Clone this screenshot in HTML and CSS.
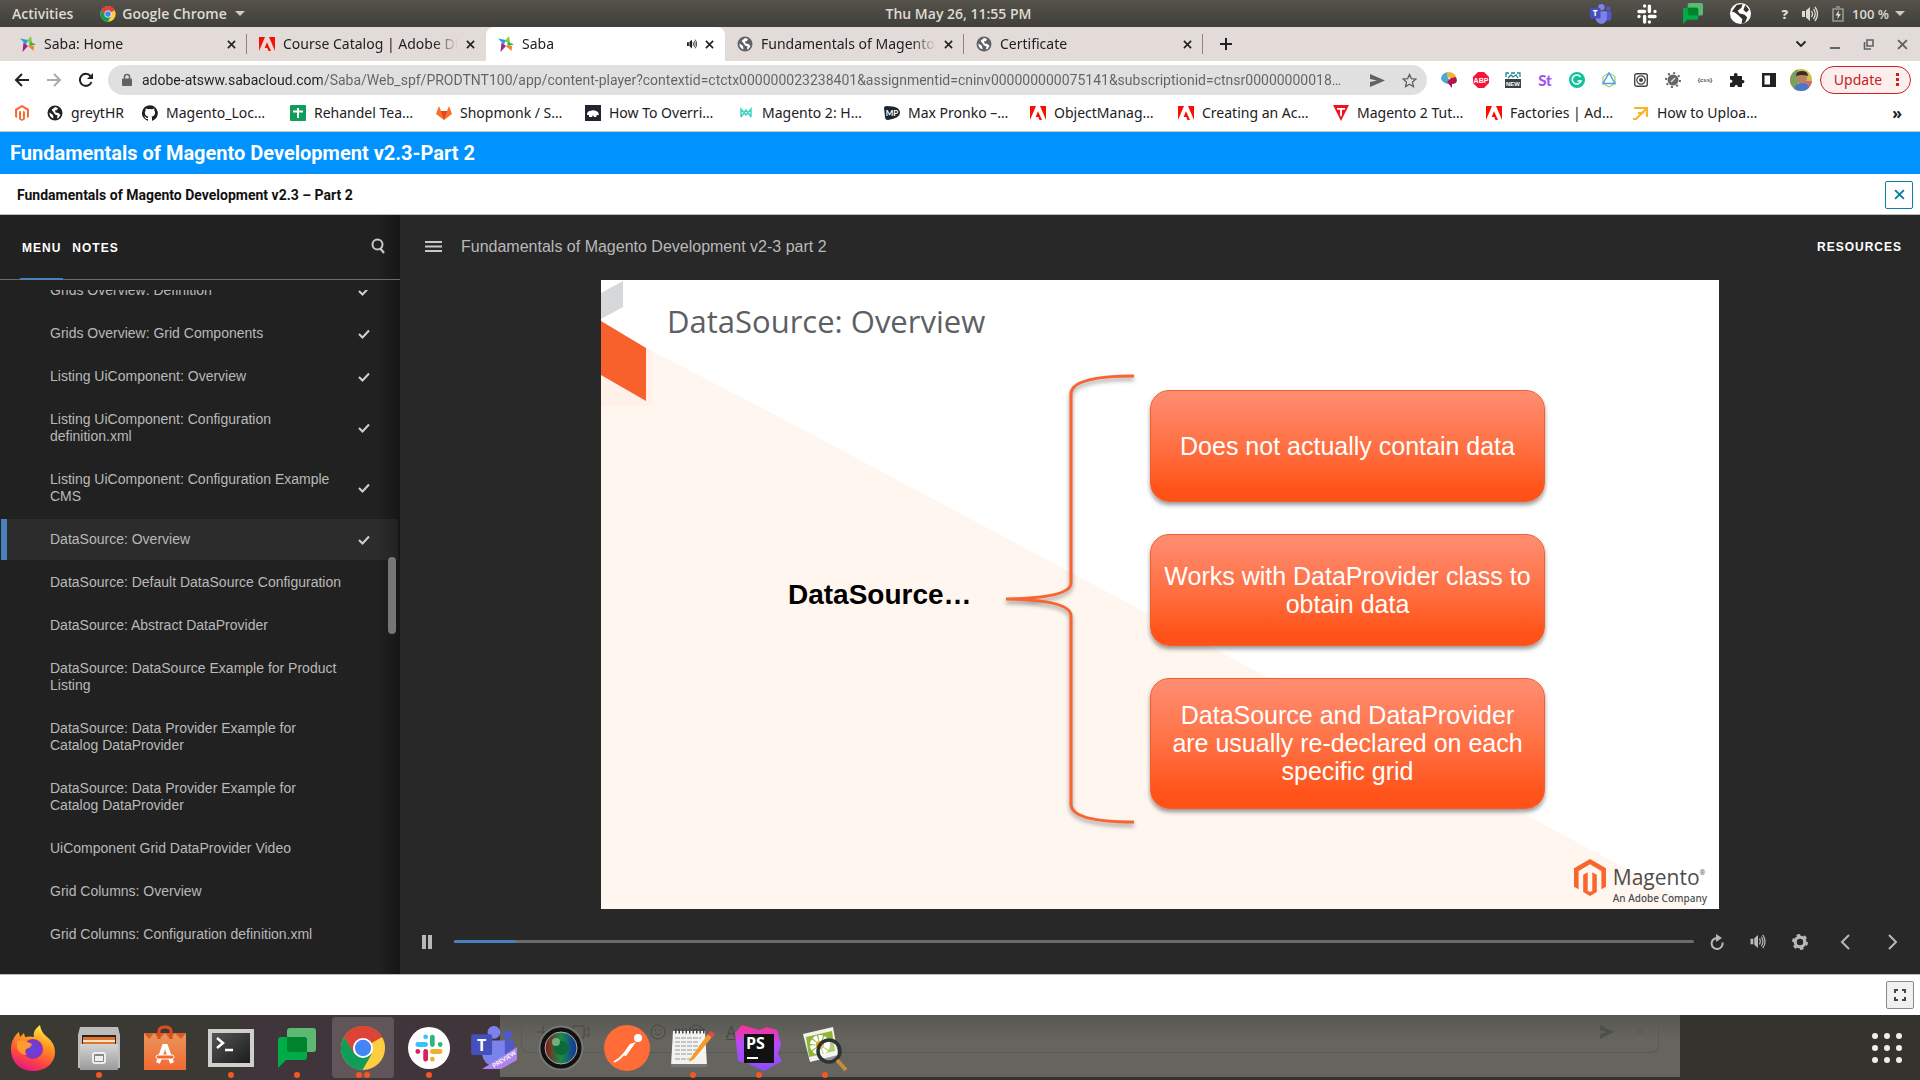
FILE: index.html
```html
<!DOCTYPE html>
<html lang="en">
<head>
<meta charset="utf-8">
<title>Saba</title>
<link rel="stylesheet" href="styles.css">
</head>
<body>
<svg class="defs" aria-hidden="true">
  <defs>
    <linearGradient id="g-ff" x1="0.7" y1="0" x2="0.3" y2="1"><stop offset="0" stop-color="#fff44f"/><stop offset=".35" stop-color="#ff9a1f"/><stop offset=".7" stop-color="#ff4a3d"/><stop offset="1" stop-color="#e31587"/></linearGradient>
    <radialGradient id="g-ffb"><stop offset="0" stop-color="#5b4be0"/><stop offset="1" stop-color="#8a2fc4"/></radialGradient>
    <linearGradient id="g-metal" x1="0" y1="0" x2="0" y2="1"><stop offset="0" stop-color="#d4d4d4"/><stop offset="1" stop-color="#9a9a9a"/></linearGradient>
    <linearGradient id="g-bag" x1="0" y1="0" x2="0" y2="1"><stop offset="0" stop-color="#e9955a"/><stop offset="1" stop-color="#f26a34"/></linearGradient>
    <linearGradient id="g-term" x1="0" y1="0" x2="1" y2="1"><stop offset="0" stop-color="#555"/><stop offset="1" stop-color="#1b1b1b"/></linearGradient>
    <linearGradient id="g-lens" x1="0" y1="0" x2="1" y2="0"><stop offset="0" stop-color="#8a1616"/><stop offset=".5" stop-color="#1d8a4a"/><stop offset="1" stop-color="#1030a0"/></linearGradient>
    <linearGradient id="g-ps" x1="0" y1="0" x2="0" y2="1"><stop offset="0" stop-color="#ff318c"/><stop offset=".4" stop-color="#b74af7"/><stop offset="1" stop-color="#8a4cff"/></linearGradient>
  </defs>
  <symbol id="chrome" viewBox="0 0 48 48">
    <circle cx="24" cy="24" r="23" fill="#ffcd40"/>
    <path d="M24 24 4.100 12.500A23 23 0 0 1 43.900 12.500Z" fill="#db4437"/><path d="M24 13h20.200A23 23 0 0 0 4.100 12.500L14 30Z" fill="#db4437"/>
    <path d="M4.100 12.500A23 23 0 0 0 23.500 47L33.500 29.500 24 34.500 14.500 29.500Z" fill="#0f9d58"/>
    <circle cx="24" cy="24" r="10.500" fill="#fff"/><circle cx="24" cy="24" r="8.500" fill="#4285f4"/>
  </symbol>
  <symbol id="saba" viewBox="0 0 16 16">
    <path d="M0 2.500 8 4 6 8.500Z" fill="#1da1dc"/><path d="M11 0 12 6.500 6.500 5.500Z" fill="#8cc63f"/><path d="M9.500 5.500 16 8.500 9.500 10Z" fill="#3fae49"/><path d="M7.500 9.500 14 10 13.500 15Z" fill="#f58220"/><path d="M3.500 6.500 8 10 2.500 16Z" fill="#a0238e"/>
  </symbol>
  <symbol id="adobe" viewBox="0 0 16 16"><path d="M0 1h6L0 15ZM10 1h6v14ZM8 6.200 12 15H9.500L8.300 12H5.600Z" fill="#fa0f00"/></symbol>
  <symbol id="globe" viewBox="0 0 16 16"><circle cx="8" cy="8" r="7.500" fill="currentColor"/><path d="M2.500 7.500 6 10l.500 3.500C3.500 12.500 2 10 2.500 7.500ZM8 2l3 1-1 2-2 .500.500 2 3 .500 2 2-2 3-1.500.500.500-3-2.500-1L6 6.500 4.500 5Z" fill="#fff"/></symbol>
  <symbol id="x" viewBox="0 0 10 10"><path d="m1 1 8 8M9 1 1 9" stroke="currentColor" stroke-width="1.800" fill="none"/></symbol>
  <symbol id="magento" viewBox="0 0 32 37"><path d="M16 0 32 9.200V27.700L27.400 30.300V11.900L16 5.300 4.600 11.900V30.300L0 27.700V9.200ZM18.300 31.700 16 33 13.700 31.700V13.200L9.200 15.800V32.900L16 37 22.800 32.900V15.800L18.300 13.200Z" fill="#f9652c"/></symbol>
  <symbol id="slack" viewBox="0 0 20 20"><g stroke-width="3.400" stroke-linecap="round" fill="none"><path d="M7.600 2v0M2 7.500h5.600" stroke="var(--s1)"/><path d="M12.400 2.200v5.300M18 7.500v0" stroke="var(--s2)"/><path d="M12.400 12.500H18M12.400 18v0" stroke="var(--s3)"/><path d="M7.600 12.500V18M2 12.500v0" stroke="var(--s4)"/></g></symbol>
  <symbol id="teams" viewBox="0 0 48 44"><circle cx="40" cy="10" r="5" fill="#5059c9"/><circle cx="25" cy="7" r="7" fill="#7b83eb"/><path d="M35 16h12v14q-1 7-7 7t-6-5Z" fill="#5059c9"/><path d="M12 16h25v16q-2 11-12 12-11-1-13-12Z" fill="#7b83eb"/><rect y="9" width="23" height="23" rx="2" fill="#4650bd"/></symbol>
  <symbol id="chat" viewBox="0 0 38 40"><path d="M9 3q0-3 3-3h23q3 0 3 3v18q0 3-3 3H9Z" fill="#5bb974"/><path d="M0 12q0-3 3-3h23q3 0 3 3v17q0 3-3 3H8L0 40Z" fill="#00ac47"/><path d="M9 9h17q3 0 3 3v12H12q-3 0-3-3Z" fill="#00832d"/></symbol>
  <symbol id="speaker" viewBox="0 0 16 16"><path d="M0 5h3v6H0ZM4 4.500 8 1v14L4 11.500Z" fill="currentColor"/><path d="M9.500 5q2 3 0 6M11.500 3q3.500 5 0 10M13 1q5 7 0 14" stroke="currentColor" stroke-width="1.300" fill="none"/></symbol>
  <symbol id="check" viewBox="0 0 12 10"><path d="m1 5 3.500 3.500L11 1.500" stroke="#d0d0d0" stroke-width="2" fill="none"/></symbol>
</svg>

<header class="topbar">
  <div class="topbar-left"><button>Activities</button><button class="app"><svg width="16" height="16"><use href="#chrome"/></svg>Google Chrome<i class="caret"></i></button></div>
  <button class="clock">Thu May 26, 11:55 PM</button>
  <div class="tray">
    <svg width="22" height="20" viewBox="0 0 48 44"><use href="#teams"/><text x="6" y="27" font-family="Open Sans, sans-serif" font-weight="700" font-size="18" fill="#fff">T</text></svg>
    <svg class="slack-mono" width="20" height="20"><use href="#slack"/></svg>
    <svg width="22" height="21"><use href="#chat"/></svg>
    <svg width="23" height="23" viewBox="0 0 24 24"><circle cx="12" cy="12" r="11" fill="#fff"/><path d="M3 10 8 3l6-1-1 4-4 3 2 3 5 1 3 3-2 5-4 2 1-5-4-4-4-3ZM17 3l4 5-3 3-3-3Z" fill="#35332e"/></svg>
    <b>?</b>
    <svg width="16" height="16"><use href="#speaker"/></svg>
    <svg width="12" height="16" viewBox="0 0 12 16"><path d="M1 3h10v12H1ZM4 1h4" stroke="#9a9893" stroke-width="1.600" fill="none"/><path d="M7 4 3.500 9.500H6L5 13.500 9 8H6.500Z" fill="#ddd"/></svg>
    <span>100 %</span><i class="caret"></i>
  </div>
</header>

<nav class="tabs" aria-label="Tabs">
  <div class="tab"><svg width="16" height="16"><use href="#saba"/></svg><a href="#">Saba: Home</a><button aria-label="Close tab"><svg width="9" height="9"><use href="#x"/></svg></button></div>
  <div class="tab"><svg width="16" height="16"><use href="#adobe"/></svg><a href="#">Course Catalog | Adobe Di</a><button aria-label="Close tab"><svg width="9" height="9"><use href="#x"/></svg></button></div>
  <div class="tab active"><svg width="16" height="16"><use href="#saba"/></svg><a href="#">Saba</a><svg width="10" height="10"><use href="#speaker"/></svg><button aria-label="Close tab"><svg width="9" height="9"><use href="#x"/></svg></button></div>
  <div class="tab"><svg class="grey" width="16" height="16"><use href="#globe"/></svg><a href="#">Fundamentals of Magento</a><button aria-label="Close tab"><svg width="9" height="9"><use href="#x"/></svg></button></div>
  <div class="tab"><svg class="grey" width="16" height="16"><use href="#globe"/></svg><a href="#">Certificate</a><button aria-label="Close tab"><svg width="9" height="9"><use href="#x"/></svg></button></div>
  <button class="newtab" aria-label="New tab"><svg width="14" height="14" viewBox="0 0 14 14"><path d="M7 1v12M1 7h12" stroke="#202124" stroke-width="2"/></svg></button>
  <div class="window-buttons">
    <button aria-label="Search tabs"><svg width="12" height="12" viewBox="0 0 12 12"><path d="m1.500 3.500 4.500 4.500 4.500-4.500" stroke="#202124" stroke-width="1.800" fill="none"/></svg></button>
    <button aria-label="Minimize"><svg width="12" height="12" viewBox="0 0 12 12"><path d="M1 10h10" stroke="#5f6368" stroke-width="2"/></svg></button>
    <button aria-label="Restore"><svg width="12" height="12" viewBox="0 0 12 12"><path d="M4 2h6v6H4ZM1.500 4v7H8" stroke="#5f6368" stroke-width="1.600" fill="none"/></svg></button>
    <button class="grey" aria-label="Close"><svg width="11" height="11"><use href="#x"/></svg></button>
  </div>
</nav>

<div class="toolbar">
  <div class="nav-buttons">
    <button aria-label="Back"><svg width="16" height="16" viewBox="0 0 16 16"><path d="M15 8H2M8 2 2 8l6 6" stroke="#202124" stroke-width="2" fill="none"/></svg></button>
    <button aria-label="Forward"><svg width="16" height="16" viewBox="0 0 16 16"><path d="M1 8h13M8 2l6 6-6 6" stroke="#a9abae" stroke-width="2" fill="none"/></svg></button>
    <button aria-label="Reload"><svg width="16" height="16" viewBox="0 0 16 16"><path d="M13.500 10A6 6 0 1 1 12.500 4" stroke="#202124" stroke-width="2" fill="none"/><path d="M15 1v6H9Z" fill="#202124"/></svg></button>
  </div>
  <div class="omnibox">
    <svg width="10" height="14" viewBox="0 0 10 14"><path d="M1 5.500h8q1 0 1 1V12q0 1-1 1H1q-1 0-1-1V6.500q0-1 1-1Z" fill="#5f6368"/><path d="M2.500 6V3.500q0-2 2.500-2t2.500 2V6" stroke="#5f6368" stroke-width="1.500" fill="none"/></svg>
    <input class="url" type="text" aria-label="Address" value="adobe-atsww.sabacloud.com/Saba/Web_spf/PRODTNT100/app/content-player?contextid=ctctx000000023238401&amp;assignmentid=cninv000000000075141&amp;subscriptionid=ctnsr00000000018…">
    <button aria-label="Share"><svg width="15" height="13" viewBox="0 0 15 13"><path d="M0 0 15 6.500 0 13V8l7-1.500L0 5Z" fill="#5f6368"/></svg></button>
    <button aria-label="Bookmark"><svg width="15" height="15" viewBox="0 0 16 16"><path d="m8 1.500 2 4.500 4.800.500-3.600 3.200 1 4.800L8 12l-4.200 2.500 1-4.800L1.200 6.500 6 6Z" stroke="#5f6368" stroke-width="1.400" fill="none"/></svg></button>
  </div>
  <div class="extensions">
    <svg width="16" height="16" viewBox="0 0 16 16"><path d="M0 6q1-5 7-6v6l3 3-3 3Q0 10 0 6Z" fill="#4aa8d8"/><path d="M6 0q8 0 9 5l-4 2-5-2Z" fill="#f5b335"/><path d="M15 5q3 7-4 7v4l-5-6 4-4Z" fill="#b0174c"/></svg>
    <svg width="16" height="16" viewBox="0 0 16 16"><path d="M5 0h6l5 5v6l-5 5H5l-5-5V5Z" fill="#f7153b"/><text x="8" y="11" text-anchor="middle" font-size="7" font-weight="700" font-family="Liberation Sans, sans-serif" fill="#fff">ABP</text></svg>
    <svg width="16" height="16" viewBox="0 0 16 16"><path d="M1 5V1h3M6 1h4M12 1h3v4M3 6l3-3 2 2 3-2 2 3" stroke="#1a8a93" fill="none" stroke-width="1.300"/><rect y="7" width="16" height="9" fill="#3c4043"/><text x="8" y="14" text-anchor="middle" font-size="6" font-weight="700" font-family="Liberation Sans, sans-serif" fill="#fff">NEW</text></svg>
    <svg width="16" height="16" viewBox="0 0 16 16"><text x="8" y="14" text-anchor="middle" font-size="15" font-weight="900" font-family="Lato, sans-serif" fill="#a155f0">St</text></svg>
    <svg width="16" height="16" viewBox="0 0 16 16"><circle cx="8" cy="8" r="8" fill="#11c29b"/><path d="M11.500 5A4.500 4.500 0 1 0 12 9H8.500" stroke="#fff" stroke-width="1.600" fill="none"/></svg>
    <svg width="16" height="16" viewBox="0 0 16 16"><path d="M8 1 14 4.500v7L8 15l-6-3.500v-7Z" stroke="#8bc34a" fill="none"/><path d="m8 1 6 10.500H2Z" stroke="#4aa0e0" stroke-width="1.500" fill="none"/></svg>
    <svg width="14" height="14" viewBox="0 0 14 14"><rect x=".7" y=".7" width="12.600" height="12.600" rx="2" fill="none" stroke="#444" stroke-width="1.400"/><circle cx="7" cy="7" r="4.200" fill="none" stroke="#444" stroke-width="1.200"/><circle cx="7" cy="7" r="2" fill="#444"/></svg>
    <svg width="16" height="16" viewBox="0 0 16 16"><circle cx="8" cy="8" r="5.500" fill="#666"/><circle cx="8" cy="8" r="7" fill="none" stroke="#666" stroke-width="2" stroke-dasharray="2 3.500"/><path d="m6 10 4-4" stroke="#ddd" stroke-width="1.500"/></svg>
    <svg width="16" height="16" viewBox="0 0 16 16"><text x="8" y="10" text-anchor="middle" font-size="6" font-weight="700" font-family="Liberation Sans, sans-serif" fill="#555">{css}</text></svg>
    <svg width="16" height="16" viewBox="0 0 16 16"><path d="M1 4h4q-.500-3 1.700-3T8.500 4H13v4q2.500-.500 2.500 1.500T13 11.500V15H9q0-2-1.700-2T5.500 15H1v-4q2.500 0 2.500-1.700T1 7.500Z" fill="#202124"/></svg>
    <svg width="14" height="14" viewBox="0 0 14 14"><path d="M0 0h14v14H0ZM2.500 2.500v9H8v-9Z" fill="#202124" fill-rule="evenodd"/></svg>
    <svg width="22" height="22" viewBox="0 0 22 22"><clipPath id="av"><circle cx="11" cy="11" r="11"/></clipPath><g clip-path="url(#av)"><path d="M0 0h22v22H0Z" fill="#d0c04a"/><path d="M0 0h8v22H0Z" fill="#7da05e"/><path d="M14 12h8v10h-8Z" fill="#d06a7a"/><ellipse cx="12" cy="9" rx="5" ry="6" fill="#b98262"/><path d="M6 7q0-5 6-5t6 5q-6-2-12 0Z" fill="#3a2b28"/><path d="M4 22q0-8 8-8t8 8Z" fill="#4a78c5"/></g></svg>
  </div>
  <button class="update">Update<svg width="4" height="14" viewBox="0 0 4 14"><path d="M0 0h3v3H0ZM0 5h3v3H0ZM0 10h3v3H0Z" fill="#c5221f"/></svg></button>
</div>

<nav class="bookmarks" aria-label="Bookmarks">
  <a href="#" aria-label="Magento"><svg width="14" height="16"><use href="#magento"/></svg></a>
  <a href="#"><svg class="black" width="16" height="16"><use href="#globe"/></svg>greytHR</a>
  <a href="#"><svg width="16" height="16" viewBox="0 0 16 16"><path d="M8 .200a8 8 0 0 0-2.500 15.600c.400 0 .500-.200.500-.400v-1.500c-2.200.500-2.700-1-2.700-1-.400-.900-.900-1.200-.900-1.200-.700-.500.100-.500.100-.500.800.100 1.200.800 1.200.800.700 1.300 1.900.900 2.300.700.100-.500.300-.900.500-1.100-1.800-.200-3.600-.900-3.600-4 0-.900.300-1.600.800-2.100-.100-.200-.400-1 .100-2.100 0 0 .700-.200 2.200.800a7.500 7.500 0 0 1 4 0c1.500-1 2.200-.800 2.200-.800.400 1.100.200 1.900.100 2.100.500.600.800 1.300.800 2.100 0 3.100-1.900 3.800-3.700 4 .300.200.600.700.600 1.500v2.200c0 .200.100.500.600.400A8 8 0 0 0 8 .200Z" fill="#1b1f23"/></svg>Magento_Loc…</a>
  <a href="#"><svg width="16" height="16" viewBox="0 0 16 16"><rect width="16" height="16" rx="1" fill="#0f9d58"/><path d="M8 3v10M3 6.500h10" stroke="#fff" stroke-width="2"/></svg>Rehandel Tea…</a>
  <a href="#"><svg width="16" height="16" viewBox="0 0 16 16"><path d="M0 9 3 1l2 5h6l2-5 3 8-8 6Z" fill="#fc6d26"/><path d="M5 6h6L8 15Z" fill="#e24329"/></svg>Shopmonk / S…</a>
  <a href="#"><svg width="16" height="16" viewBox="0 0 16 16"><path d="M0 0h16v16H0Z" fill="#20252e"/><path d="M2 10q0-4 3-4 4-2 8 1l1 3h-2l-1 2H9l-1-2-1 2H4v-2Z" fill="#fff"/></svg>How To Overri…</a>
  <a href="#"><svg width="16" height="14" viewBox="0 0 14 14"><path d="M2 11V3l5 6 5-6v8M2 11l5-7 5 7" stroke="#3fd3c0" stroke-width="1.500" fill="none"/></svg>Magento 2: H…</a>
  <a href="#"><svg width="16" height="16" viewBox="0 0 16 16"><path d="M0 3q0-2 3-2 13 0 13 7 0 5-12 7-3 0-3-3Z" fill="#1d2430"/><text x="8" y="11" text-anchor="middle" font-size="8" font-weight="700" font-family="Lato, sans-serif" fill="#fff">MP</text></svg>Max Pronko –…</a>
  <a href="#"><svg width="16" height="16"><use href="#adobe"/></svg>ObjectManag…</a>
  <a href="#"><svg width="16" height="16"><use href="#adobe"/></svg>Creating an Ac…</a>
  <a href="#"><svg width="16" height="16" viewBox="0 0 16 16"><path d="M0 0h16L8 16Z" fill="#f0131e"/><path d="M4 3h8v1.800H9V10l-1 2-1-2V4.800H4Z" fill="#fff"/></svg>Magento 2 Tut…</a>
  <a href="#"><svg width="16" height="16"><use href="#adobe"/></svg>Factories | Ad…</a>
  <a href="#"><svg width="16" height="16" viewBox="0 0 16 16"><path d="M1 3h13v9M5 8h4L3 14H0" stroke="#f9b42d" stroke-width="2.200" fill="none"/><path d="m8 9 6-6" stroke="#f9b42d" stroke-width="2.200"/></svg>How to Uploa…</a>
  <button aria-label="More bookmarks">»</button>
</nav>

<div class="course-bar">Fundamentals of Magento Development v2.3-Part 2</div>
<div class="lesson-bar"><h1>Fundamentals of Magento Development v2.3 – Part 2</h1><button aria-label="Close lesson"><svg width="11" height="11"><use href="#x"/></svg></button></div>

<div class="player">
  <aside class="sidebar">
    <div class="side-tabs"><button class="current">MENU</button><button>NOTES</button>
      <button class="search" aria-label="Search"><svg width="14" height="16" viewBox="0 0 14 16"><circle cx="6.500" cy="6.500" r="5" stroke="#c8c8c8" stroke-width="2" fill="none"/><path d="m9 10 4 5" stroke="#c8c8c8" stroke-width="2.200"/></svg></button></div>
    <div class="list-window">
      <ul class="lessons">
        <li><a href="#">Grids Overview: Definition</a><svg width="12" height="10"><use href="#check"/></svg></li>
        <li><a href="#">Grids Overview: Grid Components</a><svg width="12" height="10"><use href="#check"/></svg></li>
        <li><a href="#">Listing UiComponent: Overview</a><svg width="12" height="10"><use href="#check"/></svg></li>
        <li><a href="#">Listing UiComponent: Configuration definition.xml</a><svg width="12" height="10"><use href="#check"/></svg></li>
        <li><a href="#">Listing UiComponent: Configuration Example CMS</a><svg width="12" height="10"><use href="#check"/></svg></li>
        <li class="current"><a href="#">DataSource: Overview</a><svg width="12" height="10"><use href="#check"/></svg></li>
        <li><a href="#">DataSource: Default DataSource Configuration</a></li>
        <li><a href="#">DataSource: Abstract DataProvider</a></li>
        <li><a href="#">DataSource: DataSource Example for Product Listing</a></li>
        <li><a href="#">DataSource: Data Provider Example for Catalog DataProvider</a></li>
        <li><a href="#">DataSource: Data Provider Example for Catalog DataProvider</a></li>
        <li><a href="#">UiComponent Grid DataProvider Video</a></li>
        <li><a href="#">Grid Columns: Overview</a></li>
        <li><a href="#">Grid Columns: Configuration definition.xml</a></li>
      </ul>
    </div>
    <div class="scroll-thumb"></div>
  </aside>

  <main class="main">
    <div class="main-head">
      <button aria-label="Toggle menu"><svg width="17" height="11" viewBox="0 0 17 11"><path d="M0 1h17M0 5.500h17M0 10h17" stroke="#c8c8c8" stroke-width="2"/></svg></button>
      <span>Fundamentals of Magento Development v2-3 part 2</span>
      <button class="resources">RESOURCES</button>
    </div>
    <div class="stage">
      <article class="slide">
        <svg class="slide-art" viewBox="0 0 1118 629" preserveAspectRatio="none"><path d="M0 40 45 66 1101 629H0Z" fill="#fff6f0"/><path d="M0 60h51v66H0Z" fill="#ffefe6" opacity=".6"/><path d="M0 0h200v148L45 68 0 41Z" fill="#fff"/><path d="M0 13 22 1v26L0 39Z" fill="#d6d8da"/><path d="M0 41 45 68v53L0 95Z" fill="#f8612c"/></svg>
        <h2>DataSource: Overview</h2>
        <div class="slide-body">
          <strong>DataSource…</strong>
          <svg class="brace" width="128" height="450" viewBox="0 0 128 450"><path d="M128 2Q65 2 65 20V209Q65 224 0 225 65 226 65 242V430Q65 448 128 448" stroke="#f96430" stroke-width="3" fill="none"/></svg>
          <div class="cards">
            <p>Does not actually contain data</p>
            <p>Works with DataProvider class to obtain data</p>
            <p class="tall">DataSource and DataProvider are usually re-declared on each specific grid</p>
          </div>
        </div>
        <footer class="brand"><svg width="32" height="37"><use href="#magento"/></svg><div><b>Magento<sup>®</sup></b><small>An Adobe Company</small></div></footer>
      </article>
    </div>
    <div class="controls">
      <button aria-label="Pause"><svg width="10" height="14" viewBox="0 0 10 14"><path d="M0 0h4v14H0ZM6 0h4v14H6Z" fill="#b8b8b8"/></svg></button>
      <div class="seek"><div class="seek-fill" style="width:5%"></div></div>
      <div class="control-buttons">
        <button aria-label="Replay"><svg width="14" height="16" viewBox="0 0 14 16"><path d="M12.500 8.500A5.500 5.500 0 1 1 7 4" stroke="#b8b8b8" stroke-width="2" fill="none"/><path d="M6 0 12 4 6 8Z" fill="#b8b8b8"/></svg></button>
        <button aria-label="Volume"><svg width="16" height="15"><use href="#speaker"/></svg></button>
        <button aria-label="Settings"><svg width="16" height="16" viewBox="0 0 16 16"><circle cx="8" cy="8" r="4.800" stroke="#b8b8b8" stroke-width="3.200" fill="none"/><circle cx="8" cy="8" r="6.900" stroke="#b8b8b8" stroke-width="2.200" stroke-dasharray="3.600 3.620" fill="none"/></svg></button>
        <button class="step" aria-label="Previous"><svg width="10" height="16" viewBox="0 0 10 16"><path d="M9 1 2 8l7 7" stroke="#b8b8b8" stroke-width="2" fill="none"/></svg></button>
        <button class="step" aria-label="Next"><svg width="10" height="16" viewBox="0 0 10 16"><path d="m1 1 7 7-7 7" stroke="#b8b8b8" stroke-width="2" fill="none"/></svg></button>
      </div>
    </div>
  </main>
</div>

<div class="page-foot"><button aria-label="Full screen"><svg width="12" height="12" viewBox="0 0 12 12"><path d="M1 4V1h3M8 1h3v3M11 8v3H8M4 11H1V8" stroke="#444" stroke-width="2" fill="none"/></svg></button></div>

<footer class="dock">
  <div class="dock-back">
    <div class="composer">
      <svg width="14" height="14" viewBox="0 0 14 14"><path d="M7 1v12M1 7h12" stroke="#484843"/></svg>
      <svg width="18" height="14" viewBox="0 0 18 14"><path d="M1 1h11v12H1ZM12 6l5-4v10l-5-4" stroke="#484843" fill="none"/></svg>
      <svg width="16" height="16" viewBox="0 0 16 16"><rect x="3" y="4" width="10" height="11" stroke="#484843" fill="none"/></svg>
      <svg width="16" height="16" viewBox="0 0 16 16"><circle cx="8" cy="8" r="7" stroke="#484843" fill="none"/><path d="M5 9q3 4 6 0M5.500 5v1.500M10.500 5v1.500" stroke="#484843" fill="none"/></svg>
      <svg width="16" height="16" viewBox="0 0 16 16"><circle cx="8" cy="8" r="7" stroke="#484843" fill="none"/><circle cx="8" cy="8" r="3" stroke="#484843" fill="none"/></svg>
      <u>Aa</u>
      <svg class="send" width="14" height="14" viewBox="0 0 14 14"><path d="M0 0 14 7 0 14V9l7-2L0 5Z" fill="#50504b"/></svg>
      <svg width="8" height="8" viewBox="0 0 8 8"><path d="m1 2 3 3 3-3" stroke="#50504b" fill="none"/></svg>
    </div>
  </div>
  <button aria-label="Firefox"><svg width="46" height="48" viewBox="0 0 46 48"><path d="M23 47C9 47 1 37 1 25 1 18 4 12 9 8l1 5 4-4 1 4q5-1 9 0-2-6 6-12 1 7 6 11 9 7 9 16c0 11-9 19-22 19Z" fill="url(#g-ff)"/><circle cx="23" cy="25" r="10" fill="url(#g-ffb)"/><path d="M7 17q6-2 15 3-1 4-6 5-2 3 1 6-8-1-10-7Z" fill="#ff9a2e"/></svg></button>
  <button class="run" aria-label="Files"><svg width="44" height="46" viewBox="0 0 44 46"><path d="M3 2h38l2 8v33H1V10Z" fill="#bcbcbc"/><path d="M5 10h34v10H5Z" fill="#2b2422"/><path d="M6 12h32v8H6Z" fill="#e0752c"/><path d="M6 15h32v2H6Z" fill="#ffe2c0"/><path d="M3 19h38v26H3Z" fill="url(#g-metal)"/><rect x="16" y="28" width="12" height="10" rx="2" stroke="#eee" stroke-width="2" fill="#888"/><rect x="18" y="31" width="8" height="5" fill="#eee"/></svg></button>
  <button aria-label="Software"><svg width="44" height="46" viewBox="0 0 44 46"><path d="M1 8h42v37H1Z" fill="url(#g-bag)"/><path d="m1 8 5 6 5-6 5 6 6-6 5 6 5-6 6 6 5-6" fill="#dc5a28"/><path d="M16 14V6q0-4 6-4t6 4v8" stroke="#d94e1c" stroke-width="3" fill="none"/><path d="m15 38 6-17h2l6 17" stroke="#fff" stroke-width="4" fill="none"/><rect x="13" y="30" width="18" height="4" rx="2" fill="#f6682c" stroke="#fff"/></svg></button>
  <button class="run" aria-label="Terminal"><svg width="46" height="40" viewBox="0 0 46 40"><path d="M0 1h46v38H0Z" fill="#cfcfcf"/><path d="M4 5h38v30H4Z" fill="url(#g-term)"/><path d="m9 10 6 5-6 5M17 22h8" stroke="#fff" stroke-width="2.500" fill="none"/></svg></button>
  <button class="run" aria-label="Google Chat"><svg width="38" height="40"><use href="#chat"/></svg></button>
  <button class="run two focused" aria-label="Google Chrome"><svg width="46" height="46"><use href="#chrome"/></svg></button>
  <button class="run" aria-label="Slack"><span class="slack-disc"><svg width="28" height="28"><use href="#slack"/></svg></span></button>
  <button aria-label="Teams"><svg width="48" height="44" viewBox="0 0 48 44"><use href="#teams" width="44" height="40"/><text x="6" y="25" font-family="Open Sans, sans-serif" font-weight="700" font-size="16" fill="#fff">T</text><path d="M11 43 46 21v13L30 43Z" fill="#b084ea"/><text font-family="Lato, sans-serif" font-size="6" font-weight="700" fill="#fff" transform="translate(23 42) rotate(-32)">PREVIEW</text></svg></button>
  <button aria-label="Camera"><svg width="46" height="46" viewBox="0 0 46 46"><circle cx="23" cy="23" r="21.500" fill="#111" stroke="#777" stroke-width="2"/><circle cx="23" cy="23" r="16" fill="url(#g-lens)" stroke="#aaa"/><circle cx="23" cy="23" r="7" fill="#0b6b35"/><circle cx="18" cy="17" r="4" fill="#9fe0b0" opacity=".6"/></svg></button>
  <button aria-label="Postman"><svg width="46" height="46" viewBox="0 0 46 46"><circle cx="23" cy="23" r="23" fill="#ff6c37"/><circle cx="34" cy="13" r="4" fill="#fff"/><path d="M32 17 22 31l-4-1 8-11Z" fill="#fff"/><path d="m20 29-5 5-5 3" stroke="#fff" stroke-width="2" fill="none"/></svg></button>
  <button class="run" aria-label="Text editor"><svg width="46" height="44" viewBox="0 0 46 44"><path d="M3 5h32l2 35H1Z" fill="#f3f3ef"/><path d="M1 38h36v3H1Z" fill="#777"/><path d="M5 12h26M5 16h24M5 20h27M5 24h22M5 28h20M5 33h18" stroke="#999" stroke-dasharray="5 1"/><path d="M5 5h30" stroke="#444" stroke-width="5" stroke-dasharray="1.500 2"/><path d="M20 33 38 8l4 3-18 22-5 3Z" fill="#f39a2b"/><path d="m38 8 3-3 4 3-3 4Z" fill="#e54848"/></svg></button>
  <button class="run" aria-label="PhpStorm"><svg width="48" height="48" viewBox="0 0 48 48"><path d="M7 1 24 6l8-3 10 3 4 14-3 10 4 7-18 10-15-7-11-3L0 9Z" fill="url(#g-ps)"/><path d="M9 10h30v29H9Z" fill="#111"/><text x="11" y="25" font-family="Open Sans, sans-serif" font-weight="700" font-size="16" fill="#fff">PS</text><path d="M12 34h11" stroke="#fff" stroke-width="2"/></svg></button>
  <button class="run" aria-label="Image viewer"><svg width="46" height="46" viewBox="0 0 46 46"><path d="m1 9 30-7 5 28-28 7Z" fill="#f2f2ea"/><path d="m4 12 26-6 3 20-26 6Z" fill="#8fb43a"/><circle cx="18" cy="20" r="7" fill="none" stroke="#fff" stroke-width="6" stroke-dasharray="3.500 1"/><circle cx="18" cy="20" r="4" fill="#f3a71c"/><circle cx="27" cy="26" r="11" fill="#ffffff50" stroke="#2c3336" stroke-width="3.500"/><path d="m35 35 9 10" stroke="#c98a3a" stroke-width="4"/></svg></button>
  <button class="apps" aria-label="Show applications"><svg width="32" height="32" viewBox="0 0 32 32"><g fill="#eee"><circle cx="4" cy="4" r="3"/><circle cx="16" cy="4" r="3"/><circle cx="28" cy="4" r="3"/><circle cx="4" cy="16" r="3"/><circle cx="16" cy="16" r="3"/><circle cx="28" cy="16" r="3"/><circle cx="4" cy="28" r="3"/><circle cx="16" cy="28" r="3"/><circle cx="28" cy="28" r="3"/></g></svg></button>
</footer>
</body>
</html>
```
FILE: styles.css
```css
* { box-sizing: border-box; }
body {
  margin: 0;
  min-height: 100vh;
  display: flex;
  flex-direction: column;
  font: 14px/18px "Noto Sans", "Open Sans", sans-serif;
  color: #202124;
  background: #fff;
}
button {
  display: flex;
  align-items: center;
  justify-content: center;
  border: 0;
  margin: 0;
  padding: 0;
  background: none;
  color: inherit;
  font: inherit;
  letter-spacing: inherit;
}
a { color: inherit; text-decoration: none; }
svg { display: block; flex: none; }
.defs { position: absolute; width: 0; height: 0; }
.grey { color: #5f6368; }
.black { color: #202124; }

/* desktop top bar */
.topbar {
  height: 27px;
  display: grid;
  grid-template-columns: 1fr auto 1fr;
  align-items: center;
  padding: 0 15px 0 12px;
  background: linear-gradient(#55524a, #403f3a);
  color: #dfdbd2;
  font-family: "Open Sans", sans-serif;
  font-weight: 600;
}
.topbar-left, .tray { display: flex; align-items: center; }
.topbar-left { gap: 27px; }
.app { gap: 6px; }
.caret {
  border: 5px solid transparent;
  border-top-color: #cfcbc2;
  border-bottom: 0;
  margin-left: 2px;
}
.tray { justify-content: flex-end; gap: 14px; font-size: 13px; }
.tray > svg:nth-of-type(-n+3) { margin-right: 11px; }
.tray b { margin-left: 16px; }
.tray .caret { margin-left: -8px; }
.tray span { margin-left: -6px; }
.slack-mono { --s1: #fff; --s2: #fff; --s3: #fff; --s4: #fff; }

/* browser tabs */
.tabs { display: flex; height: 34px; padding-left: 8px; background: #e3dbd8; }
.tab {
  flex: 0 1 239px;
  min-width: 0;
  display: flex;
  align-items: center;
  gap: 8px;
  padding: 0 11px 0 12px;
  position: relative;
}
.tab:nth-child(1)::after, .tab:nth-child(4)::after, .tab:nth-child(5)::after {
  content: "";
  position: absolute;
  right: 0;
  top: 7px;
  width: 1px;
  height: 20px;
  background: #8a8684;
}
.tab a {
  flex: 1;
  overflow: hidden;
  white-space: nowrap;
  mask-image: linear-gradient(90deg, #000 calc(100% - 24px), transparent);
}
.tab.active { background: #fff; border-radius: 8px 8px 0 0; }
.newtab { width: 46px; }
.window-buttons { margin-left: auto; display: flex; gap: 22px; padding-right: 12px; }

/* address row */
.toolbar { display: flex; align-items: center; height: 38px; padding: 0 9px 0 14px; }
.nav-buttons { display: flex; gap: 16px; width: 94px; }
.omnibox {
  flex: 1;
  min-width: 0;
  display: flex;
  align-items: center;
  height: 30px;
  padding: 0 7px 0 14px;
  gap: 10px;
  border-radius: 15px;
  background: #e0e0e0;
}
.omnibox button { width: 22px; }
.url {
  flex: 1;
  min-width: 0;
  border: 0;
  padding: 0;
  font: 14px/18px Roboto, sans-serif;
  color: transparent;
  background: linear-gradient(90deg, #202124 180px, #5f6368 180px) text;
}
.extensions { display: flex; align-items: center; padding-left: 6px; }
.extensions svg { margin: 0 8px; }
.extensions svg:nth-child(7), .extensions svg:nth-child(11) { margin: 0 9px; }
.extensions svg:last-child { margin: 0 8px 0 5px; }
.update {
  width: 91px;
  height: 28px;
  gap: 14px;
  padding-left: 3px;
  border: 1px solid #c5221f;
  border-radius: 14px;
  background: #fceeed;
  color: #c5221f;
}

/* bookmarks */
.bookmarks {
  display: grid;
  grid-template-columns: 32px 95px 148px 146px 149px 153px 146px 146px 148px 155px 153px 147px 1fr auto;
  align-items: center;
  height: 33px;
  padding: 0 18px 4px 15px;
  border-bottom: 1px solid #c8c8c8;
}
.bookmarks a { display: flex; align-items: center; gap: 8px; white-space: nowrap; }
.bookmarks button { font-size: 16px; font-weight: 700; }

/* course headings */
.course-bar {
  height: 42px;
  padding: 0 10px;
  background: #0092ff;
  color: #fff;
  font: 700 20px/42px Roboto, sans-serif;
}
.lesson-bar {
  display: flex;
  align-items: center;
  justify-content: space-between;
  height: 41px;
  padding: 1px 7px 0 17px;
  border-bottom: 1px solid #bbb;
}
.lesson-bar h1 { margin: 0; font: 700 14px/20px Roboto, sans-serif; color: #111; }
.lesson-bar button { width: 28px; height: 28px; border: 1px solid #0a7fa8; border-radius: 2px; color: #0a7fa8; }

/* player */
.player {
  flex: 1;
  min-height: 600px;
  display: flex;
  background: #282828;
  border-bottom: 1px solid #bbb;
  font-family: "Liberation Sans", Arial, sans-serif;
}
.sidebar {
  position: relative;
  width: 400px;
  flex: none;
  display: flex;
  flex-direction: column;
  background: linear-gradient(90deg, #212121 378px, #161616 400px);
}
.side-tabs {
  display: flex;
  gap: 7px;
  height: 65px;
  padding: 0 15px 0 20px;
  border-bottom: 1px solid #6a6a6a;
  color: #fff;
  font-size: 12px;
  font-weight: 700;
  letter-spacing: 1px;
}
.side-tabs button { height: 65px; padding: 0 2px; }
.side-tabs .current { border-bottom: 2px solid #4a80bb; border-top: 2px solid transparent; }
.side-tabs .search { margin-left: auto; padding: 0 0 4px; }
.list-window { height: 0; flex: 1; margin-top: 10px; overflow: hidden; }
.lessons { list-style: none; margin: -20px 2px 0 1px; padding: 0; color: #b9b9b9; line-height: 17px; }
.lessons li {
  display: flex;
  align-items: center;
  justify-content: space-between;
  padding: 12px 28px 12px 43px;
  margin-bottom: 2px;
  border-left: 6px solid transparent;
}
.lessons a { width: 296px; }
.lessons .current { background: #ffffff0d; border-left-color: #4a80bb; }
.scroll-thumb {
  position: absolute;
  right: 4px;
  top: 45%;
  width: 8px;
  height: 77px;
  border-radius: 4px;
  background: #767676;
}
.main { flex: 1; min-width: 0; display: flex; flex-direction: column; }
.main-head {
  display: flex;
  align-items: center;
  gap: 19px;
  height: 65px;
  padding: 0 18px 2px 25px;
  color: #b9b9b9;
  font-size: 16px;
}
.resources { margin-left: auto; color: #fff; font-size: 12px; font-weight: 700; letter-spacing: 1px; }
.stage { flex: 1; min-height: 0; display: flex; justify-content: center; }
.slide {
  position: relative;
  height: 100%;
  aspect-ratio: 1118 / 629;
  display: flex;
  flex-direction: column;
  background: #fff;
}
.slide-art { position: absolute; inset: 0; width: 100%; height: 100%; }
.slide h2, .slide-body, .brand { position: relative; }
.slide h2 {
  height: 89px;
  margin: 0;
  padding-left: 66px;
  color: #5d6063;
  font: 400 31px/83px "Open Sans", sans-serif;
}
.slide-body { flex: 1; display: flex; align-items: center; padding-left: 187px; }
.slide-body strong { width: 218px; color: #000; font-size: 28px; line-height: 32px; padding-bottom: 8px; }
.brace { filter: drop-shadow(0 3px 2px #0006); }
.cards { display: grid; gap: 32px; width: 395px; margin-left: 16px; }
.cards p {
  min-height: 112px;
  margin: 0;
  padding: 0 13px;
  display: flex;
  align-items: center;
  justify-content: center;
  text-align: center;
  border: 1px solid #f0602e;
  border-radius: 19px;
  background: linear-gradient(#ff8e74, #ff7043 50%, #ff5218 90%);
  box-shadow: 0 3px 4px #0006;
  color: #fff;
  font-size: 25px;
  line-height: 28px;
}
.cards .tall { min-height: 131px; }
.brand { display: flex; gap: 7px; height: 80px; padding: 30px 12px 0 0; justify-content: flex-end; color: #4d4d4d; }
.brand b { display: block; padding-top: 4px; font: 400 21px/28px "Open Sans", sans-serif; }
.brand sup { font-size: 7px; line-height: 0; vertical-align: 10px; }
.brand small { display: block; font: 500 10px/14px "Noto Sans", sans-serif; }
.controls { display: flex; align-items: center; height: 65px; padding: 0 16px 0 22px; color: #b8b8b8; }
.seek { flex: 1; height: 3px; margin: 0 16px 0 22px; border-radius: 2px; background: #6b6b6b; }
.seek-fill { height: 3px; border-radius: 2px; background: #4a80bb; }
.control-buttons { display: flex; gap: 26px; }
.control-buttons .step { width: 22px; }

.page-foot { display: flex; align-items: center; justify-content: flex-end; height: 40px; padding-right: 6px; }
.page-foot button { width: 28px; height: 28px; border: 1px solid #8a8a8a; border-radius: 2px; background: #f0f0f0; }

/* dock */
.dock {
  position: relative;
  display: flex;
  height: 65px;
  background: linear-gradient(90deg, #3a3934 240px, #40353a 240px, #40353a 500px, #35332e 500px);
}
.dock-back {
  position: absolute;
  inset: 0 240px 3px 500px;
  padding: 0 21px;
  background: linear-gradient(#585752, #65645f 40%);
}
.composer {
  display: flex;
  align-items: center;
  gap: 22px;
  height: 38px;
  padding: 0 14px 4px;
  border: 1px solid #5a5954;
  border-top: 0;
  border-radius: 0 0 8px 8px;
  color: #484843;
  font-size: 16px;
}
.composer .send { margin-left: auto; }
.dock button { position: relative; width: 62px; margin: 2px; border-radius: 4px; }
.dock .run::after {
  content: "";
  position: absolute;
  bottom: 0;
  left: 28px;
  width: 6px;
  height: 6px;
  border-radius: 3px;
  background: #f05a22;
}
.dock .two::after { left: 24px; box-shadow: 8px 0 #f05a22; }
.dock .focused { background: #60565a; }
.slack-disc {
  display: flex;
  align-items: center;
  justify-content: center;
  width: 42px;
  height: 42px;
  border-radius: 50%;
  background: #fff;
  --s1: #36c5f0;
  --s2: #2eb67d;
  --s3: #ecb22e;
  --s4: #e01e5a;
}
.dock .apps { margin-left: auto; }
```
